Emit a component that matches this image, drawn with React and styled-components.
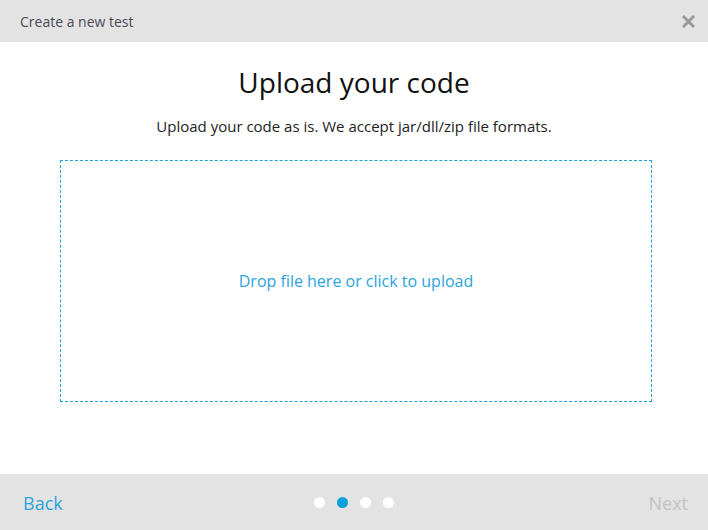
import styled, { createGlobalStyle } from "styled-components";

const GlobalStyle = createGlobalStyle`
  * {
    box-sizing: border-box;
  }

  body {
    margin: 0;
    font-family: "Open Sans", "Liberation Sans", sans-serif;
    background: #fff;
  }
`;

const Dialog = styled.div`
  width: 708px;
  height: 530px;
  display: flex;
  flex-direction: column;
  background: #fff;
`;

const Header = styled.div`
  height: 42px;
  background: #e3e3e3;
  display: flex;
  align-items: center;
  justify-content: space-between;
  padding: 0 12px 0 20px;
  font-size: 14px;
  color: #4a4a55;
`;

const CloseButton = styled.button`
  border: none;
  background: none;
  padding: 0;
  width: 16px;
  height: 16px;
  display: flex;
  align-items: center;
  justify-content: center;
  cursor: pointer;
`;

const Body = styled.div`
  flex: 1;
  display: flex;
  flex-direction: column;
  align-items: center;
  padding-top: 21px;
`;

const Title = styled.h1`
  margin: 0;
  font-size: 28px;
  font-weight: 400;
  line-height: 38px;
  color: #111;
`;

const Subtitle = styled.p`
  margin: 15px 0 0;
  font-size: 15px;
  line-height: 20px;
  color: #222;
`;

const DropZone = styled.div`
  align-self: flex-start;
  margin: 24px 0 0 60px;
  width: 592px;
  height: 242px;
  border: 1px dashed #1ba3d6;
  display: flex;
  align-items: center;
  justify-content: center;
  font-size: 16px;
  color: #2ba3dc;
  cursor: pointer;
`;

const Footer = styled.div`
  height: 56px;
  background: #e3e3e3;
  display: grid;
  grid-template-columns: 1fr auto 1fr;
  align-items: center;
  padding: 1px 20px 0;
`;

const NavLink = styled.span`
  font-size: 18px;
  color: ${(p) => (p.disabled ? "#c2c2c2" : "#2ba3dc")};
  justify-self: ${(p) => (p.right ? "end" : "start")};
  margin-left: ${(p) => (p.right ? "0" : "3px")};
  cursor: ${(p) => (p.disabled ? "default" : "pointer")};
`;

const Dots = styled.div`
  display: flex;
  gap: 12px;
`;

const Dot = styled.span`
  width: 11px;
  height: 11px;
  border-radius: 50%;
  background: ${(p) => (p.active ? "#0aa0d8" : "#fff")};
`;

const App = () => {
  return (
    <>
      <GlobalStyle />
      <Dialog>
        <Header>
          <span>Create a new test</span>
          <CloseButton>
            <svg width="13" height="13" viewBox="0 0 13 13">
              <path
                d="M2 2L11 11M11 2L2 11"
                stroke="#9a9a9a"
                strokeWidth="3"
                strokeLinecap="square"
              />
            </svg>
          </CloseButton>
        </Header>

        <Body>
          <Title>Upload your code</Title>
          <Subtitle>
            Upload your code as is. We accept jar/dll/zip file formats.
          </Subtitle>
          <DropZone>Drop file here or click to upload</DropZone>
        </Body>

        <Footer>
          <NavLink>Back</NavLink>
          <Dots>
            <Dot />
            <Dot active />
            <Dot />
            <Dot />
          </Dots>
          <NavLink right disabled>
            Next
          </NavLink>
        </Footer>
      </Dialog>
    </>
  );
};

export default App;
